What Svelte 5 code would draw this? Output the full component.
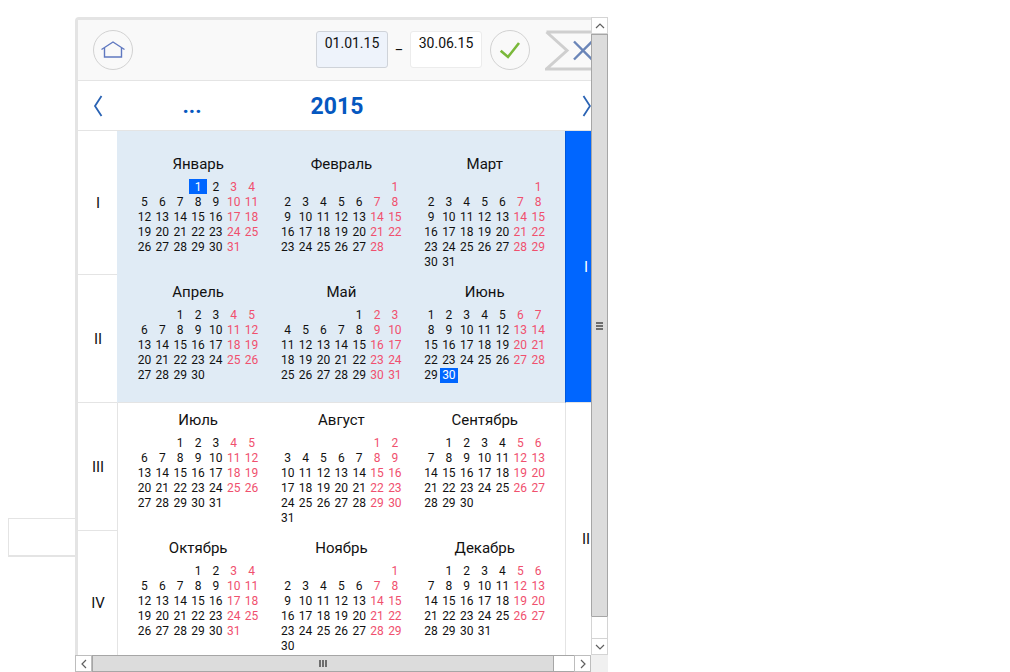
<script>
  const names = ['Январь','Февраль','Март','Апрель','Май','Июнь','Июль','Август','Сентябрь','Октябрь','Ноябрь','Декабрь'];
  const year = 2015;
  function month(m) {
    const first = (new Date(year, m, 1).getDay() + 6) % 7;
    const count = new Date(year, m + 1, 0).getDate();
    const cells = [];
    for (let i = 0; i < first; i++) cells.push({ n: '', key: 'e' + i });
    for (let d = 1; d <= count; d++) {
      const col = (first + d - 1) % 7;
      const picked = (m === 0 && d === 1) || (m === 5 && d === 30);
      cells.push({ n: d, key: 'd' + d, off: col > 4, picked });
    }
    return { name: names[m], cells };
  }
  const quarters = [
    { label: 'I', months: [0, 1, 2].map(month), cls: 'q1 sel' },
    { label: 'II', months: [3, 4, 5].map(month), cls: 'q2 sel' },
    { label: 'III', months: [6, 7, 8].map(month), cls: 'q3' },
    { label: 'IV', months: [9, 10, 11].map(month), cls: 'q4' }
  ];
</script>

<div class="stage">
  <div class="ghost"></div>
  <div class="frame">
    <div class="top">
      <div class="viewport">
        <div class="panel">
          <header class="head">
            <button class="round home" aria-label="Домой">
              <svg width="24" height="20" viewBox="0 0 24 20" fill="none">
                <path d="M.5 9.500 12 2l11.500 7.500" stroke="#5f78c0" stroke-width="1.400"/>
                <path d="M3.500 8v9h17V8" stroke="#5f78c0" stroke-width="1.400"/>
              </svg>
            </button>
            <div class="date from">01.01.15</div>
            <span class="dash">_</span>
            <div class="date">30.06.15</div>
            <button class="round ok" aria-label="Применить">
              <svg width="22" height="18" viewBox="0 0 22 18" fill="none">
                <path d="M1.700 9.700 9 16 20 2" stroke="#7ab83a" stroke-width="2.600"/>
              </svg>
            </button>
            <svg class="close" width="62" height="42" viewBox="0 0 62 42" fill="none">
              <path d="M1.500 2H60M60 39H1.500L22 20.500 1.500 2" stroke="#cfcfcf" stroke-width="3"/>
              <path d="M29 11.500 47 29.500M47 11.500 29 29.500" stroke="#6a85b8" stroke-width="2.400"/>
            </svg>
          </header>
          <nav class="nav">
            <svg class="chev" width="10" height="24" viewBox="0 0 10 24" fill="none"><path d="M8.500 2 2 12l6.500 10" stroke="#2a63b4" stroke-width="1.800"/></svg>
            <span class="dots">...</span>
            <span class="year">2015</span>
            <svg class="chev next" width="10" height="24" viewBox="0 0 10 24" fill="none"><path d="M1.500 2 8 12 1.500 22" stroke="#2a63b4" stroke-width="1.800"/></svg>
          </nav>
          <div class="grid">
            <div class="quarters">
              {#each quarters as q}
                <div class="row {q.cls}">
                  <div class="qlabel">{q.label}</div>
                  <div class="months">
                    {#each q.months as m}
                      <div class="month">
                        <div class="title">{m.name}</div>
                        <div class="days">
                          {#each m.cells as c (c.key)}
                            <span class="day" class:off={c.off} class:picked={c.picked}>{c.n}</span>
                          {/each}
                        </div>
                      </div>
                    {/each}
                  </div>
                </div>
              {/each}
            </div>
            <div class="halves">
              <div class="half active">I</div>
              <div class="half">II</div>
            </div>
          </div>
        </div>
      </div>
      <div class="vbar">
        <div class="btn"><svg width="10" height="6" viewBox="0 0 10 6" fill="none"><path d="M1 5 5 1l4 4" stroke="#606060" stroke-width="1.200"/></svg></div>
        <div class="vthumb"><i></i><i></i><i></i></div>
        <div class="vtrack"></div>
        <div class="btn low"><svg width="10" height="6" viewBox="0 0 10 6" fill="none"><path d="M1 1l4 4 4-4" stroke="#606060" stroke-width="1.200"/></svg></div>
      </div>
    </div>
    <div class="bottom">
      <div class="hbar">
        <div class="hbtn"><svg width="6" height="10" viewBox="0 0 6 10" fill="none"><path d="M5 1 1 5l4 4" stroke="#606060" stroke-width="1.200"/></svg></div>
        <div class="hthumb"><i></i><i></i><i></i></div>
        <div class="htrack"></div>
        <div class="hbtn right"><svg width="6" height="10" viewBox="0 0 6 10" fill="none"><path d="M1 1l4 4-4 4" stroke="#606060" stroke-width="1.200"/></svg></div>
      </div>
      <div class="corner"></div>
    </div>
  </div>
</div>

<style>
  :global(body) { background: #fff; }
  .stage {
    display: flex;
    width: 1010px;
    height: 672px;
    padding: 17px 0 0 8px;
    box-sizing: border-box;
    overflow: hidden;
    font-family: Roboto, sans-serif;
    color: #111;
  }
  .ghost {
    width: 67px;
    height: 39px;
    margin-top: 501px;
    box-sizing: border-box;
    border: 1px solid #e4e4e4;
    border-right: 0;
    border-bottom-width: 2px;
  }
  .frame { width: 533px; height: 655px; display: flex; flex-direction: column; }
  .top { display: flex; height: 638px; }
  .viewport { width: 516px; height: 638px; overflow: hidden; }
  .panel {
    width: 560px;
    box-sizing: border-box;
    border-left: 3px solid #e4e4e4;
    border-top: 3px solid #e4e4e4;
    border-top-left-radius: 4px;
  }
  .head {
    height: 61px;
    box-sizing: border-box;
    background: #f9f9f9;
    border-bottom: 1px solid #e4e4e4;
    display: flex;
    align-items: flex-start;
    padding: 10px 0 0 15px;
  }
  .round {
    width: 40px;
    height: 40px;
    border-radius: 50%;
    border: 1px solid #d2d2d2;
    background: transparent;
    padding: 0;
    display: flex;
    align-items: center;
    justify-content: center;
    box-sizing: border-box;
  }
  .date {
    width: 72px;
    height: 37px;
    margin-top: 1px;
    box-sizing: border-box;
    border: 1px solid #ececec;
    border-radius: 3px;
    background: #fff;
    font-size: 14px;
    line-height: 23px;
    text-align: center;
  }
  .date.from { margin-left: 183px; background: #eef3fb; border-color: #cfd3d9; }
  .dash { width: 22px; text-align: center; font-size: 14px; line-height: 27px; margin-top: 1px; }
  .ok { margin-left: 8px; }
  .close { margin: 0 0 0 15px; flex: none; }
  .nav {
    height: 50px;
    box-sizing: border-box;
    border-bottom: 1px solid #e4e4e4;
    display: flex;
    align-items: center;
    padding-left: 15px;
    color: #0558c0;
  }
  .chev { flex: none; }
  .dots { width: 20px; margin-left: 79px; font-size: 22px; font-weight: 700; line-height: 24px; text-align: center; }
  .year { width: 54px; margin: 2px 0 0 108px; font-size: 23px; font-weight: 700; line-height: 30px; text-align: center; }
  .next { margin-left: 218px; }
  .grid { display: flex; align-items: flex-start; }
  .quarters { width: 487px; flex: none; }
  .row { display: flex; height: 128px; box-sizing: border-box; }
  .row.q1, .row.q4 { height: 144px; }
  .qlabel {
    width: 39px;
    flex: none;
    box-sizing: border-box;
    border-bottom: 1px solid #e4e4e4;
    padding-left: 1px;
    display: flex;
    align-items: center;
    justify-content: center;
    font-size: 15px;
  }
  .q4 .qlabel { border-bottom: 0; }
  .months {
    width: 448px;
    box-sizing: border-box;
    border-left: 1px solid #e4e4e4;
    display: flex;
    padding: 7px 0 0 8.500px;
  }
  .q1 .months { padding-top: 23px; }
  .sel .months { background: #e0ebf5; border-left-color: #e0ebf5; }
  .q2 .months { border-bottom: 1px solid #e4e4e4; }
  .month { width: 143.300px; flex: none; }
  .title { text-align: center; font-size: 15px; line-height: 20px; }
  .days {
    display: grid;
    grid-template-columns: repeat(7, 17.860px);
    grid-auto-rows: 15px;
    margin: 6px 0 0 9px;
    font-size: 12px;
  }
  .q1 .days { margin-top: 5px; }
  .day { text-align: center; line-height: 15px; }
  .q1 .day { line-height: 17px; }
  .day.off { color: #f0506e; }
  .day.picked { background: #0066ff; color: #fff; }
  .halves { width: 41px; flex: none; }
  .half {
    height: 272px;
    box-sizing: border-box;
    border-left: 1px solid #e4e4e4;
    display: flex;
    align-items: center;
    justify-content: center;
    font-size: 15px;
  }
  .half.active { background: #0066ff; color: #fff; border-left-color: #0058dc; border-bottom: 1px solid #e4e4e4; }
  .vbar { width: 17px; height: 638px; display: flex; flex-direction: column; box-sizing: border-box; }
  .btn {
    height: 17px;
    flex: none;
    box-sizing: border-box;
    border: 1px solid #d4d4d4;
    background: #fff;
    display: flex;
    align-items: center;
    justify-content: center;
  }
  .vthumb {
    height: 582px;
    flex: none;
    box-sizing: border-box;
    background: #dcdcdc;
    border: 1px solid #a6a6a6;
    border-bottom: 0;
    display: flex;
    flex-direction: column;
    align-items: center;
    justify-content: center;
    gap: 1px;
  }
  .vthumb i { width: 7px; height: 2px; background: #6e6e6e; display: block; }
  .vtrack { flex: 1; background: #fff; border: 1px solid #d4d4d4; border-top-color: #a6a6a6; border-bottom: 0; }
  .bottom { display: flex; height: 17px; }
  .hbar { width: 516px; display: flex; }
  .hbtn {
    width: 17px;
    flex: none;
    box-sizing: border-box;
    border: 1px solid #bdbdbd;
    background: #fff;
    display: flex;
    align-items: center;
    justify-content: center;
  }
  .hthumb {
    width: 462px;
    flex: none;
    box-sizing: border-box;
    background: #dcdcdc;
    border: 1px solid #a6a6a6;
    display: flex;
    align-items: center;
    justify-content: center;
    gap: 1px;
  }
  .hthumb i { width: 2px; height: 7px; background: #6e6e6e; display: block; }
  .htrack { flex: 1; background: #fff; border-top: 1px solid #a6a6a6; border-bottom: 1px solid #a6a6a6; }
  .corner { flex: 1; background: #f0f0f0; }
</style>
